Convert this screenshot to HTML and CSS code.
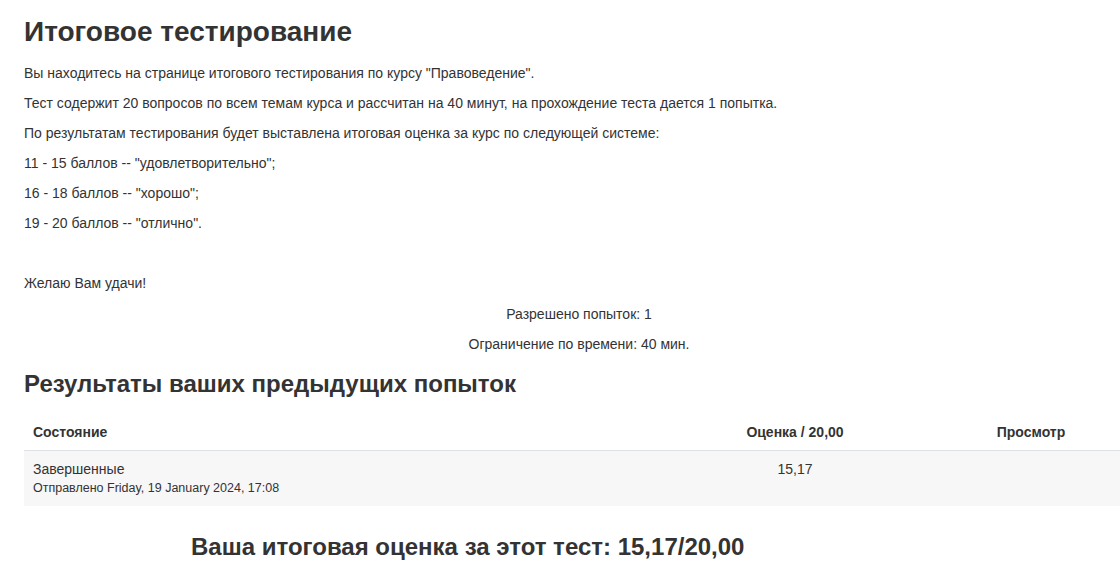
FILE: index.html
```html
<!DOCTYPE html>
<html lang="ru">
<head>
<meta charset="utf-8">
<title>Итоговое тестирование</title>
<link rel="stylesheet" href="styles.css">
</head>
<body>
<div class="main">
  <h2 class="title">Итоговое тестирование</h2>
  <div class="intro">
    <p>Вы находитесь на странице итогового тестирования по курсу "Правоведение".</p>
    <p>Тест содержит 20 вопросов по всем темам курса и рассчитан на 40 минут, на прохождение теста дается 1 попытка.</p>
    <p>По результатам тестирования будет выставлена итоговая оценка за курс по следующей системе:</p>
    <p>11 - 15 баллов -- "удовлетворительно";</p>
    <p>16 - 18 баллов -- "хорошо";</p>
    <p>19 - 20 баллов -- "отлично".</p>
    <p><br></p>
    <p>Желаю Вам удачи!</p>
  </div>
  <div class="info">
    <p>Разрешено попыток: 1</p>
    <p>Ограничение по времени: 40 мин.</p>
  </div>
  <h3 class="section">Результаты ваших предыдущих попыток</h3>
  <table class="attempts">
    <thead>
      <tr>
        <th class="c-state">Состояние</th>
        <th class="c-grade">Оценка / 20,00</th>
        <th class="c-review">Просмотр</th>
      </tr>
    </thead>
    <tbody>
      <tr>
        <td class="c-state">Завершенные<span class="submitted">Отправлено Friday, 19 January 2024, 17:08</span></td>
        <td class="c-grade">15,17</td>
        <td class="c-review"></td>
      </tr>
    </tbody>
  </table>
  <h3 class="final">Ваша итоговая оценка за этот тест: 15,17/20,00</h3>
</div>
</body>
</html>
```
FILE: styles.css
```css
html, body {
  margin: 0;
  padding: 0;
  background: #fff;
  overflow: hidden;
}
body {
  font-family: "Liberation Sans", Arial, sans-serif;
  color: #333;
  font-size: 14px;
  line-height: 20px;
}
.main {
  width: 1110px;
  padding: 0 0 0 24px;
}
.title {
  font-size: 28px;
  font-weight: bold;
  line-height: 34px;
  margin: 15px 0 14px;
  color: #333;
}
.intro p, .info p {
  margin: 0 0 10px;
}
.info {
  text-align: center;
  padding-top: 1px;
}
.section {
  font-size: 24px;
  font-weight: bold;
  line-height: 30px;
  margin: 15px 0 16px;
}
.attempts {
  width: 100%;
  border-collapse: collapse;
}
.attempts th {
  font-weight: bold;
  padding: 7px 9px 8px;
  border-bottom: 1px solid #dee2e6;
  line-height: 20px;
}
.attempts td {
  background: #f7f7f7;
  padding: 9px 9px 8px;
  vertical-align: top;
  line-height: 19px;
}
.attempts .c-state { text-align: left; }
.attempts .c-grade { text-align: center; width: 248px; }
.attempts .c-review { text-align: center; width: 188px; }
.submitted {
  display: block;
  font-size: 12.5px;
}
.final {
  font-size: 24px;
  font-weight: bold;
  margin: 26px 0 0;
  padding-left: 167px;
  line-height: 30px;
}
```
